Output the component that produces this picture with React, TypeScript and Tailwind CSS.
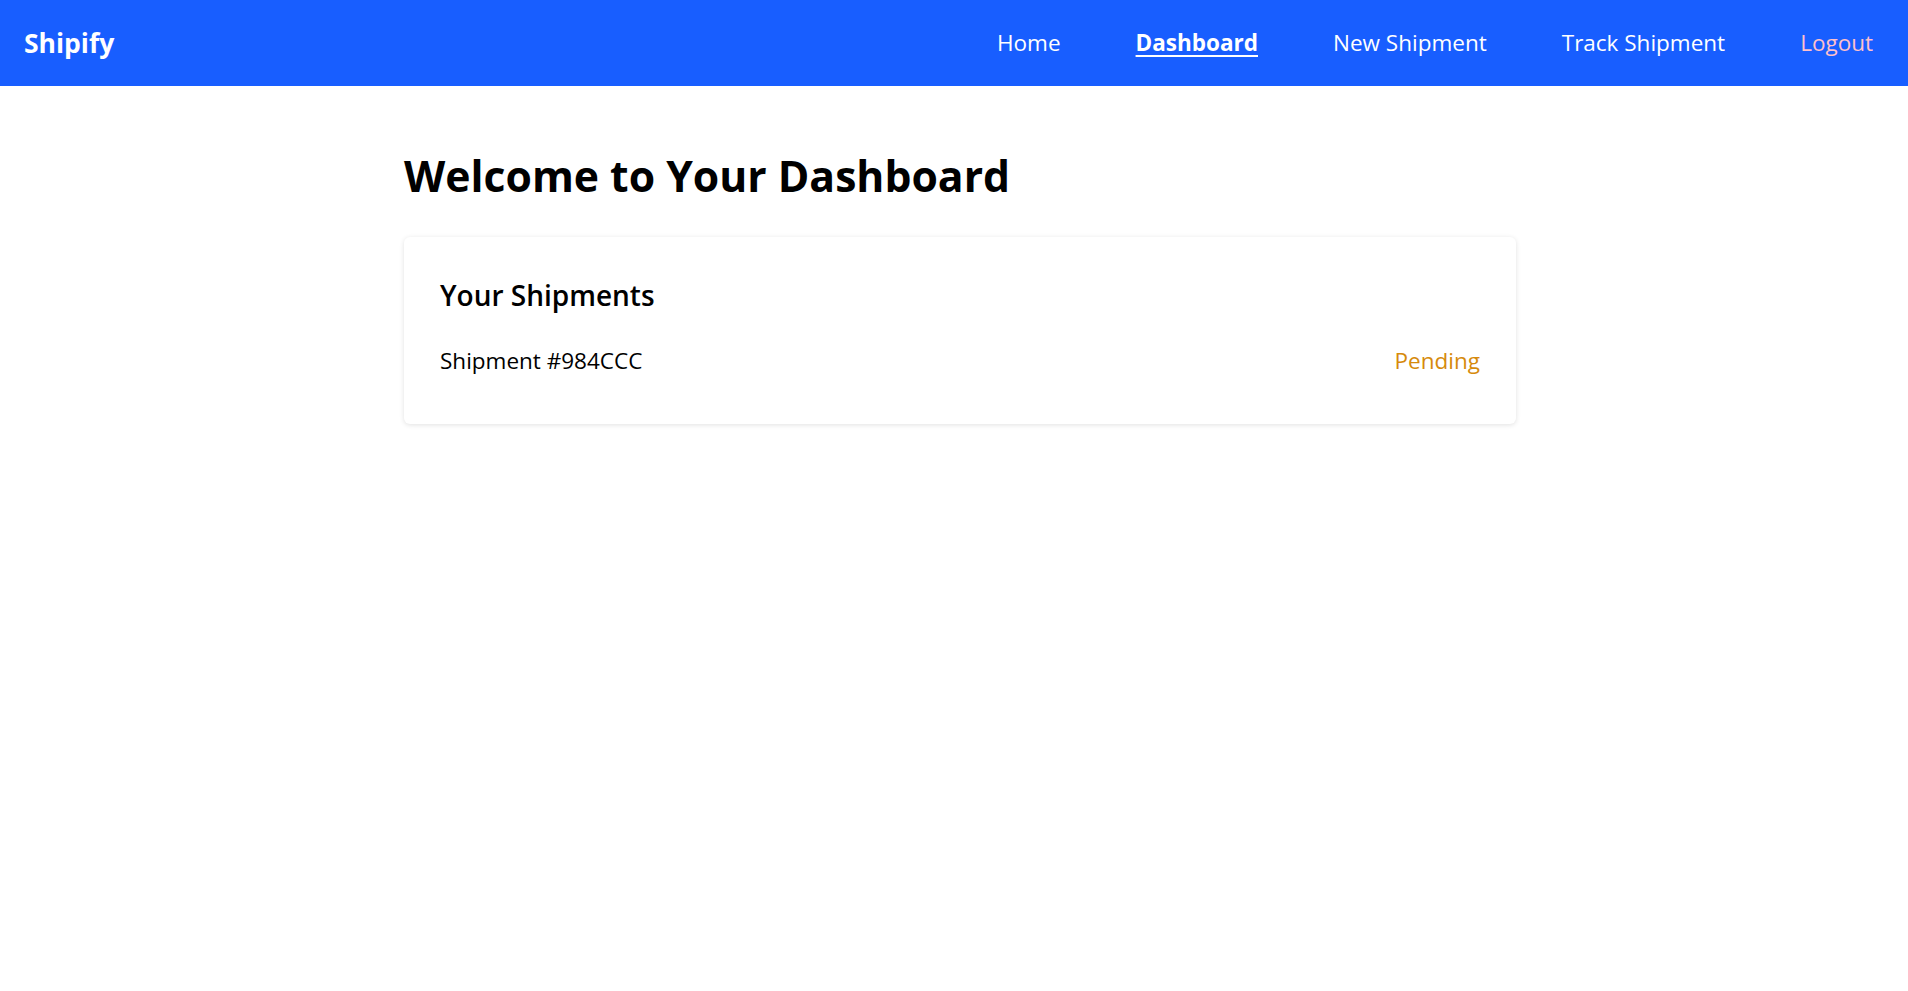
const navLinks = [
  { label: 'Home', active: false, color: 'text-white' },
  { label: 'Dashboard', active: true, color: 'text-white' },
  { label: 'New Shipment', active: false, color: 'text-white' },
  { label: 'Track Shipment', active: false, color: 'text-white' },
  { label: 'Logout', active: false, color: 'text-[#ffc0cb]' },
]

const shipments = [{ id: '984CCC', status: 'Pending' }]

export default function App() {
  return (
    <div className="min-h-screen bg-white text-black font-['Open_Sans',sans-serif]">
      <nav className="h-[86px] bg-[#185eff] flex items-center justify-between pl-[24px] pr-[35px]">
        <span className="text-[26.5px] font-bold text-white leading-none">Shipify</span>
        <div className="flex items-center gap-[75px]">
          {navLinks.map((link) => (
            <a
              key={link.label}
              href="#"
              className={`text-[22.5px] leading-none ${link.color} ${
                link.active ? 'font-bold underline underline-offset-[4px] decoration-2' : ''
              }`}
            >
              {link.label}
            </a>
          ))}
        </div>
      </nav>
      <main className="ml-[404px] w-[1112px] pt-[64px]">
        <h1 className="text-[42.7px] font-bold leading-[1.2] mb-[36px]">Welcome to Your Dashboard</h1>
        <div className="rounded-[6px] bg-white shadow-[0_1px_5px_rgba(0,0,0,0.12)] px-[36px] pt-[42px] pb-[46px]">
          <h2 className="text-[28px] font-semibold leading-[1.2] mb-[31px]">Your Shipments</h2>
          {shipments.map((s) => (
            <div key={s.id} className="flex items-center justify-between text-[22.5px] leading-[1.5]">
              <span>Shipment #{s.id}</span>
              <span className="text-[#d68a0c]">{s.status}</span>
            </div>
          ))}
        </div>
      </main>
    </div>
  )
}
